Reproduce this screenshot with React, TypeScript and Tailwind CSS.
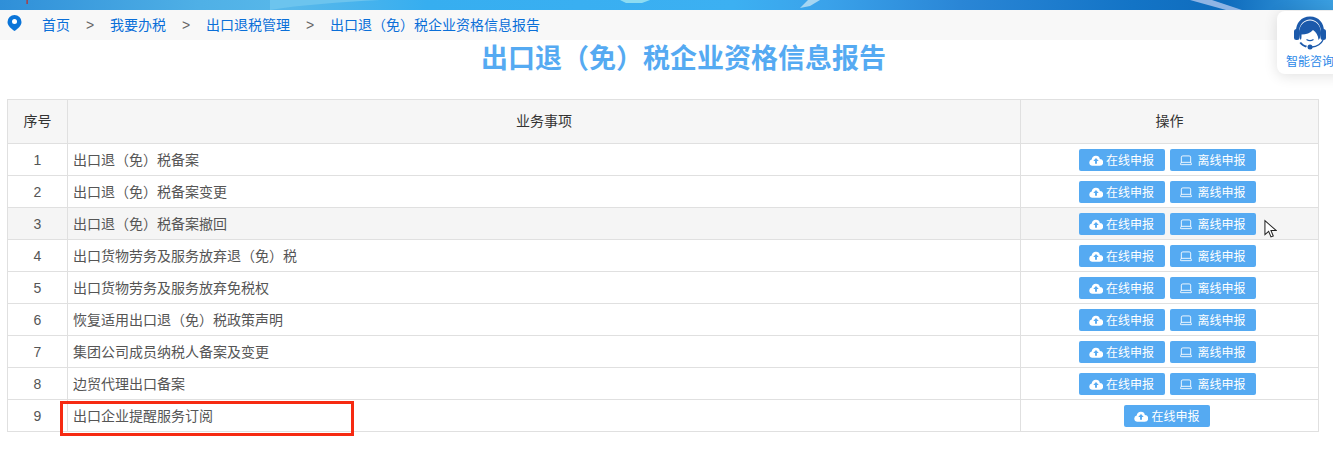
import React from 'react';
import { Laptop } from 'lucide-react';

const rows = [
  '出口退（免）税备案',
  '出口退（免）税备案变更',
  '出口退（免）税备案撤回',
  '出口货物劳务及服务放弃退（免）税',
  '出口货物劳务及服务放弃免税权',
  '恢复适用出口退（免）税政策声明',
  '集团公司成员纳税人备案及变更',
  '边贸代理出口备案',
  '出口企业提醒服务订阅',
];

const crumbs = ['首页', '我要办税', '出口退税管理', '出口退（免）税企业资格信息报告'];

const CloudIcon = () => (
  <svg viewBox="0 0 16 12" className="w-[14px] h-[11px] fill-white mr-[3px]">
    <path d="M4 12a3.6 3.6 0 0 1-.9-7.1A4.6 4.6 0 0 1 8 .5a4.5 4.5 0 0 1 4.4 3.7A3.9 3.9 0 0 1 12.200 12z" />
    <path d="M8 3.200 4.900 6.600h2v3h2.200v-3h2z" className="fill-[#55aaf2]" />
  </svg>
);

const ActionButton = ({ offline }: { offline?: boolean }) => (
  <button className="h-[22px] w-[86px] flex items-center justify-center rounded-[2px] bg-[#55aaf2] text-white text-[12px] leading-none pt-[2px]">
    {offline ? <Laptop className="w-[14px] h-[14px] mr-[4px] -mt-[1px]" strokeWidth={1.5} /> : <CloudIcon />}
    {offline ? '离线申报' : '在线申报'}
  </button>
);

const AgentIcon = () => (
  <svg viewBox="0 0 34 34" className="w-[34px] h-[34px]">
    {/* headband and hair */}
    <path d="M17 0.500C8 0.500 3 7.500 3 15h3c.4-6.500 5-11.500 11-11.500S27.600 8.500 28 15h3C31 7.500 26 .5 17 .5z" fill="#1c5aab" />
    <path d="M6 17C6 9.500 11 4.500 17 4.500S28 9.500 28 17c0 3-1 5.500-2.500 7-.2-4.500-2.500-8-5.500-10-2.500 3-7 4.500-11.500 4.500.1 2 0 4.500-.7 5.500C6.700 22.500 6 20 6 17z" fill="#1c5aab" />
    <rect x="1" y="13" width="5.500" height="11" rx="2.500" fill="#1c5aab" />
    <rect x="27.500" y="13" width="5.500" height="11" rx="2.500" fill="#1c5aab" />
    {/* mouth */}
    <path d="M13.500 23.500c2 1.300 5 1.300 7 0" stroke="#1c5aab" strokeWidth="1.100" fill="none" />
    {/* shoulder and mic arm */}
    <path d="M8 26c1.500 2 3.500 3.200 6 3.800l-1 1.600C10.500 30.800 8 29 6.500 27z" fill="#1c5aab" />
    <path d="M30 24c-1.500 3.500-6 7-11 7" stroke="#1c5aab" strokeWidth="1.300" fill="none" />
    <circle cx="17" cy="31" r="2.500" fill="#1c5aab" />
  </svg>
);

export default function App() {
  return (
    <div className="relative w-[1333px] h-[455px] overflow-hidden bg-white font-['Liberation_Sans','Noto_Sans_CJK_SC',sans-serif]">
      {/* Banner strip */}
      <div className="h-[10px] overflow-hidden bg-[linear-gradient(90deg,#2f8fd8_0%,#4fb0e6_15%,#58b8ea_22%,#36aef0_32%,#3cb0f2_55%,#3aa2ea_62%,#2a86d6_72%,#1374c6_85%,#0f6cbd_92%,#3b9fe0_100%)]">
        <svg viewBox="0 0 1333 10" className="w-full h-full">
          <path d="M26.500 0h1.200v4h-1.200z" fill="#c8281e" />
          <path d="M270 10C300 5 340 2 380 0H270z" fill="#6cc4ee" />
          <path d="M620 0h30l-8 3h-16z" fill="#8ddcf2" />
          <path d="M800 8l8-8h12l-10 6z" fill="#a5d6f2" />
          <path d="M1190 0h22l30 10h-16z" fill="#8fb4e4" />
        </svg>
      </div>

      {/* Breadcrumb */}
      <div className="h-[30px] bg-[#f8f8f8] flex items-center pl-[7px] text-[14px]">
        <svg viewBox="0 0 14 16" className="w-[15px] h-[16px] -mt-[5px] mr-[20px]">
          <path d="M7 0a7 7 0 0 0-7 7c0 4 4 7 7 9 3-2 7-5 7-9a7 7 0 0 0-7-7z" fill="#0a74d8" />
          <circle cx="7" cy="6.500" r="2.500" fill="#fff" />
        </svg>
        {crumbs.map((c, i) => (
          <React.Fragment key={c}>
            {i > 0 && <span className="w-[40px] text-center text-[#666]">&gt;</span>}
            <span className="text-[#0a6fd8]">{c}</span>
          </React.Fragment>
        ))}
      </div>

      {/* Floating help */}
      <div className="absolute top-[11px] left-[1277px] w-[70px] h-[63px] bg-white rounded-[8px] shadow-[0_2px_14px_rgba(0,0,0,0.12)] pl-[9px] pt-[5px]">
        <div className="pl-[7px]"><AgentIcon /></div>
        <div className="text-[12px] leading-[18px] mt-[3px] text-[#2a88e8] whitespace-nowrap">智能咨询</div>
      </div>

      <h1 className="text-center text-[27px] leading-[40px] font-bold text-[#55aaf2] -mt-[1px] pl-[34px]">
        出口退（免）税企业资格信息报告
      </h1>

      {/* Table */}
      <table className="ml-[7px] mt-[20px] w-[1312px] table-fixed border-collapse text-[14px] text-[#555]">
        <thead>
          <tr className="h-[44px] bg-[#f6f6f6] text-[#333]">
            <th className="w-[60px] border border-[#e0e0e0] font-normal">序号</th>
            <th className="border border-[#e0e0e0] font-normal">业务事项</th>
            <th className="w-[298px] border border-[#e0e0e0] font-normal">操作</th>
          </tr>
        </thead>
        <tbody>
          {rows.map((name, i) => (
            <tr key={name} className={`h-[32px] ${i === 2 ? 'bg-[#f5f5f5]' : ''}`}>
              <td className="border border-[#e0e0e0] text-center pt-[2px]">{i + 1}</td>
              <td className="border border-[#e0e0e0] px-[5px] pt-[2px]">{name}</td>
              <td className="border border-[#e0e0e0]">
                <div className="flex justify-center gap-[5px] pr-[5px]">
                  <ActionButton />
                  {i < 8 && <ActionButton offline />}
                </div>
              </td>
            </tr>
          ))}
        </tbody>
      </table>

      {/* Red annotation around the last row */}
      <div className="absolute left-[60px] top-[401px] w-[294px] h-[35px] border-[3px] border-[#f62a12]" />

      {/* Mouse pointer */}
      <svg viewBox="0 0 14 20" className="absolute left-[1264px] top-[219px] w-[13px] h-[20px]">
        <path d="M1 1v15l4-3.500 2.500 6 2.500-1-2.500-6H13z" fill="#fff" stroke="#222" strokeWidth="1.100" />
      </svg>
    </div>
  );
}
